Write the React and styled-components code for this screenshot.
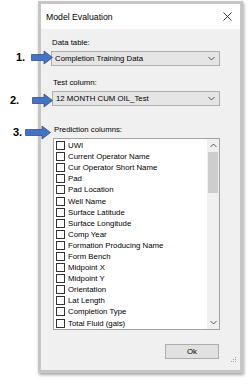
import React from "react";
import styled, { createGlobalStyle } from "styled-components";

const GlobalStyle = createGlobalStyle`
  html, body {
    margin: 0;
    padding: 0;
    background: #ffffff;
  }
  body {
    font-family: "Liberation Sans", Arial, sans-serif;
  }
`;

const Page = styled.div`
  position: relative;
  width: 250px;
  height: 384px;
  overflow: hidden;
  padding: 1px 0 0 38px;
  box-sizing: border-box;
`;

const Dialog = styled.div`
  width: 205px;
  height: 372px;
  box-sizing: border-box;
  border: 3px solid #c6c6c6;
  box-shadow: 1px 2px 3px rgba(0, 0, 0, 0.35);
  display: flex;
  flex-direction: column;
  background: #f0f0f0;
`;

const TitleBar = styled.div`
  height: 25px;
  background: #ffffff;
  display: flex;
  align-items: center;
  justify-content: space-between;
  padding: 0 8px 0 5px;
  font-size: 8.7px;
  color: #000;
`;

const Body = styled.div`
  flex: 1;
  position: relative;
  display: flex;
  flex-direction: column;
  padding: 9px 20px 0 10px;
`;

const Label = styled.div`
  font-size: 7.8px;
  line-height: 10px;
  color: #000;
  margin-top: ${(p) => p.$top || 0}px;
  margin-left: ${(p) => p.$indent || 1}px;
  margin-bottom: 3px;
`;

const Combo = styled.div`
  height: 15px;
  box-sizing: border-box;
  border: 1px solid #adadad;
  background: #e5e5e5;
  display: flex;
  align-items: center;
  justify-content: space-between;
  padding: 0 4px 0 3px;
  font-size: 7.8px;
  color: #000;
  margin-left: ${(p) => p.$indent || 0}px;
`;

const ListBox = styled.div`
  height: 192px;
  margin-left: 2px;
  box-sizing: border-box;
  border: 1px solid #a3a3a3;
  background: #ffffff;
  display: flex;
`;

const Items = styled.div`
  flex: 1;
  padding-top: 1px;
  overflow: hidden;
`;

const Row = styled.div`
  height: 11.1px;
  display: flex;
  align-items: center;
  padding-left: 2px;
  font-size: 7.8px;
  color: #000;
  white-space: nowrap;
`;

const Check = styled.span`
  width: 9px;
  height: 9px;
  box-sizing: border-box;
  border: 1px solid #333;
  background: #fff;
  margin-right: 3px;
  flex: none;
`;

const Scrollbar = styled.div`
  width: 12px;
  background: #f0f0f0;
  display: flex;
  flex-direction: column;
  align-items: center;
`;

const ScrollArrow = styled.div`
  height: 13px;
  display: flex;
  align-items: center;
  justify-content: center;
`;

const Thumb = styled.div`
  width: 10px;
  height: 41px;
  background: #cdcdcd;
`;

const Track = styled.div`
  flex: 1;
`;

const Footer = styled.div`
  display: flex;
  justify-content: flex-end;
  margin-top: 14px;
`;

const Button = styled.div`
  width: 54px;
  height: 15px;
  box-sizing: border-box;
  border: 1px solid #adadad;
  background: #e1e1e1;
  display: flex;
  align-items: center;
  justify-content: center;
  font-size: 7.8px;
  color: #000;
  margin-right: 1px;
`;

const Grip = styled.div`
  position: absolute;
  right: 3px;
  bottom: 3px;
`;

const Number = styled.div`
  position: absolute;
  left: ${(p) => p.$x}px;
  top: ${(p) => p.$y}px;
  font-size: 11px;
  font-weight: bold;
  line-height: 12px;
  color: #000;
`;

const Arrow = styled.svg`
  position: absolute;
  left: ${(p) => p.$x}px;
  top: ${(p) => p.$y}px;
`;

const Chevron = ({ up }) => (
  <svg width="7" height="5" viewBox="0 0 7 5">
    <path
      d={up ? "M0.5 4 L3.5 1 L6.5 4" : "M0.5 1 L3.5 4 L6.5 1"}
      fill="none"
      stroke="#555"
      strokeWidth="1"
    />
  </svg>
);

const BlueArrow = ({ x, y, w }) => (
  <Arrow $x={x} $y={y} width={w} height="15" viewBox={`0 0 ${w} 15`}>
    <path
      d={`M0.5 4.5 H${w - 9} V1 L${w - 0.5} 7.5 L${w - 9} 14 V10.5 H0.5 Z`}
      fill="#4472c4"
      stroke="#2f528f"
      strokeWidth="0.8"
    />
  </Arrow>
);

const columns = [
  "UWI",
  "Current Operator Name",
  "Cur Operator Short Name",
  "Pad",
  "Pad Location",
  "Well Name",
  "Surface Latitude",
  "Surface Longitude",
  "Comp Year",
  "Formation Producing Name",
  "Form Bench",
  "Midpoint X",
  "Midpoint Y",
  "Orientation",
  "Lat Length",
  "Completion Type",
  "Total Fluid (gals)",
];

const App = () => {
  return (
    <>
      <GlobalStyle />
      <Page>
        <Dialog>
          <TitleBar>
            <span>Model Evaluation</span>
            <svg width="9" height="9" viewBox="0 0 9 9">
              <path d="M0.5 0.5 L8.5 8.5 M8.5 0.5 L0.5 8.5" stroke="#222" strokeWidth="0.9" />
            </svg>
          </TitleBar>
          <Body>
            <Label>Data table:</Label>
            <Combo>
              <span>Completion Training Data</span>
              <Chevron />
            </Combo>
            <Label $top={12} $indent={2}>Test column:</Label>
            <Combo $indent={1}>
              <span>12 MONTH CUM OIL_Test</span>
              <Chevron />
            </Combo>
            <Label $top={19} $indent={3}>Prediction columns:</Label>
            <ListBox>
              <Items>
                {columns.map((c) => (
                  <Row key={c}>
                    <Check />
                    {c}
                  </Row>
                ))}
              </Items>
              <Scrollbar>
                <ScrollArrow>
                  <Chevron up />
                </ScrollArrow>
                <Thumb />
                <Track />
                <ScrollArrow>
                  <Chevron />
                </ScrollArrow>
              </Scrollbar>
            </ListBox>
            <Footer>
              <Button>Ok</Button>
            </Footer>
            <Grip>
              <svg width="6" height="6" viewBox="0 0 6 6">
                <g fill="#a0a0a0">
                  <rect x="4" y="0" width="1" height="1" />
                  <rect x="2" y="2" width="1" height="1" />
                  <rect x="4" y="2" width="1" height="1" />
                  <rect x="0" y="4" width="1" height="1" />
                  <rect x="2" y="4" width="1" height="1" />
                  <rect x="4" y="4" width="1" height="1" />
                </g>
              </svg>
            </Grip>
          </Body>
        </Dialog>
        <Number $x={16} $y={51}>1.</Number>
        <BlueArrow x={31} y={50} w={22} />
        <Number $x={10} $y={94}>2.</Number>
        <BlueArrow x={32} y={93} w={21} />
        <Number $x={13} $y={126}>3.</Number>
        <BlueArrow x={25} y={125} w={26} />
      </Page>
    </>
  );
};

export default App;
